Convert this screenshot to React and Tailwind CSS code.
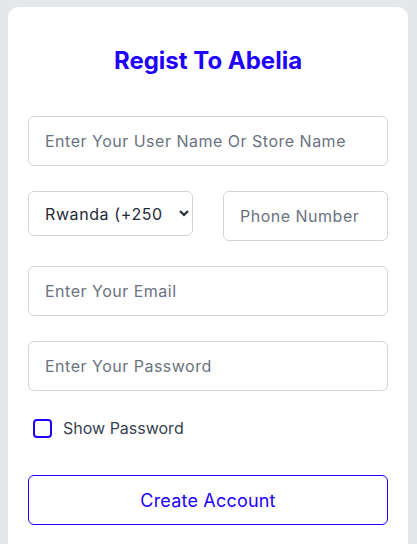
import React, { useState } from 'react'

export default function App() {
  const [show, setShow] = useState(false)
  const field = 'w-full h-[50px] rounded-md border border-[#d4d4d8] bg-white px-4 text-[16px] tracking-[0.5px] text-[#1f2937] placeholder:text-[#6b7280] outline-none'

  return (
    <div className="min-h-[544px] bg-[#e5e7eb] pl-2 pr-[9px] pt-[7px] font-['Inter',sans-serif]">
      <div className="rounded-t-[10px] bg-white px-5 pt-[38px] pb-10 min-h-[537px]">
        <h1 className="text-center text-2xl font-bold leading-[32px] text-[#1f00ff]">Regist To Abelia</h1>

        <form className="mt-[39px] flex flex-col gap-[25px]" onSubmit={e => e.preventDefault()}>
          <input className={field} placeholder="Enter Your User Name Or Store Name" />

          <div className="grid grid-cols-2 gap-[30px] items-start">
            <select className="h-[45px] w-full rounded-md border border-[#d4d4d8] bg-white pl-3 pr-[14px] text-[16px] tracking-[0.6px] text-[#1f2937] outline-none">
              <option>Rwanda (+250)</option>
              <option>Kenya (+254)</option>
              <option>Uganda (+256)</option>
            </select>
            <input className={field} placeholder="Phone Number" />
          </div>

          <input className={field} placeholder="Enter Your Email" type="email" />
          <input className={field} placeholder="Enter Your Password" type={show ? 'text' : 'password'} />
        </form>

        <label className="mt-[25px] ml-[5px] flex items-center gap-[11px] cursor-pointer">
          <input type="checkbox" checked={show} onChange={e => setShow(e.target.checked)}
            className="peer sr-only" />
          <span className="h-[19px] w-[19px] rounded-[4px] border-2 border-[#1f00ff] bg-white" />
          <span className="text-[16px] text-[#374151]">Show Password</span>
        </label>

        <button className="mt-[35px] h-[50px] w-full rounded-md border border-[#1f00ff] bg-white text-[18px] tracking-[0.2px] text-[#1f00ff]">
          Create Account
        </button>
      </div>
    </div>
  )
}
